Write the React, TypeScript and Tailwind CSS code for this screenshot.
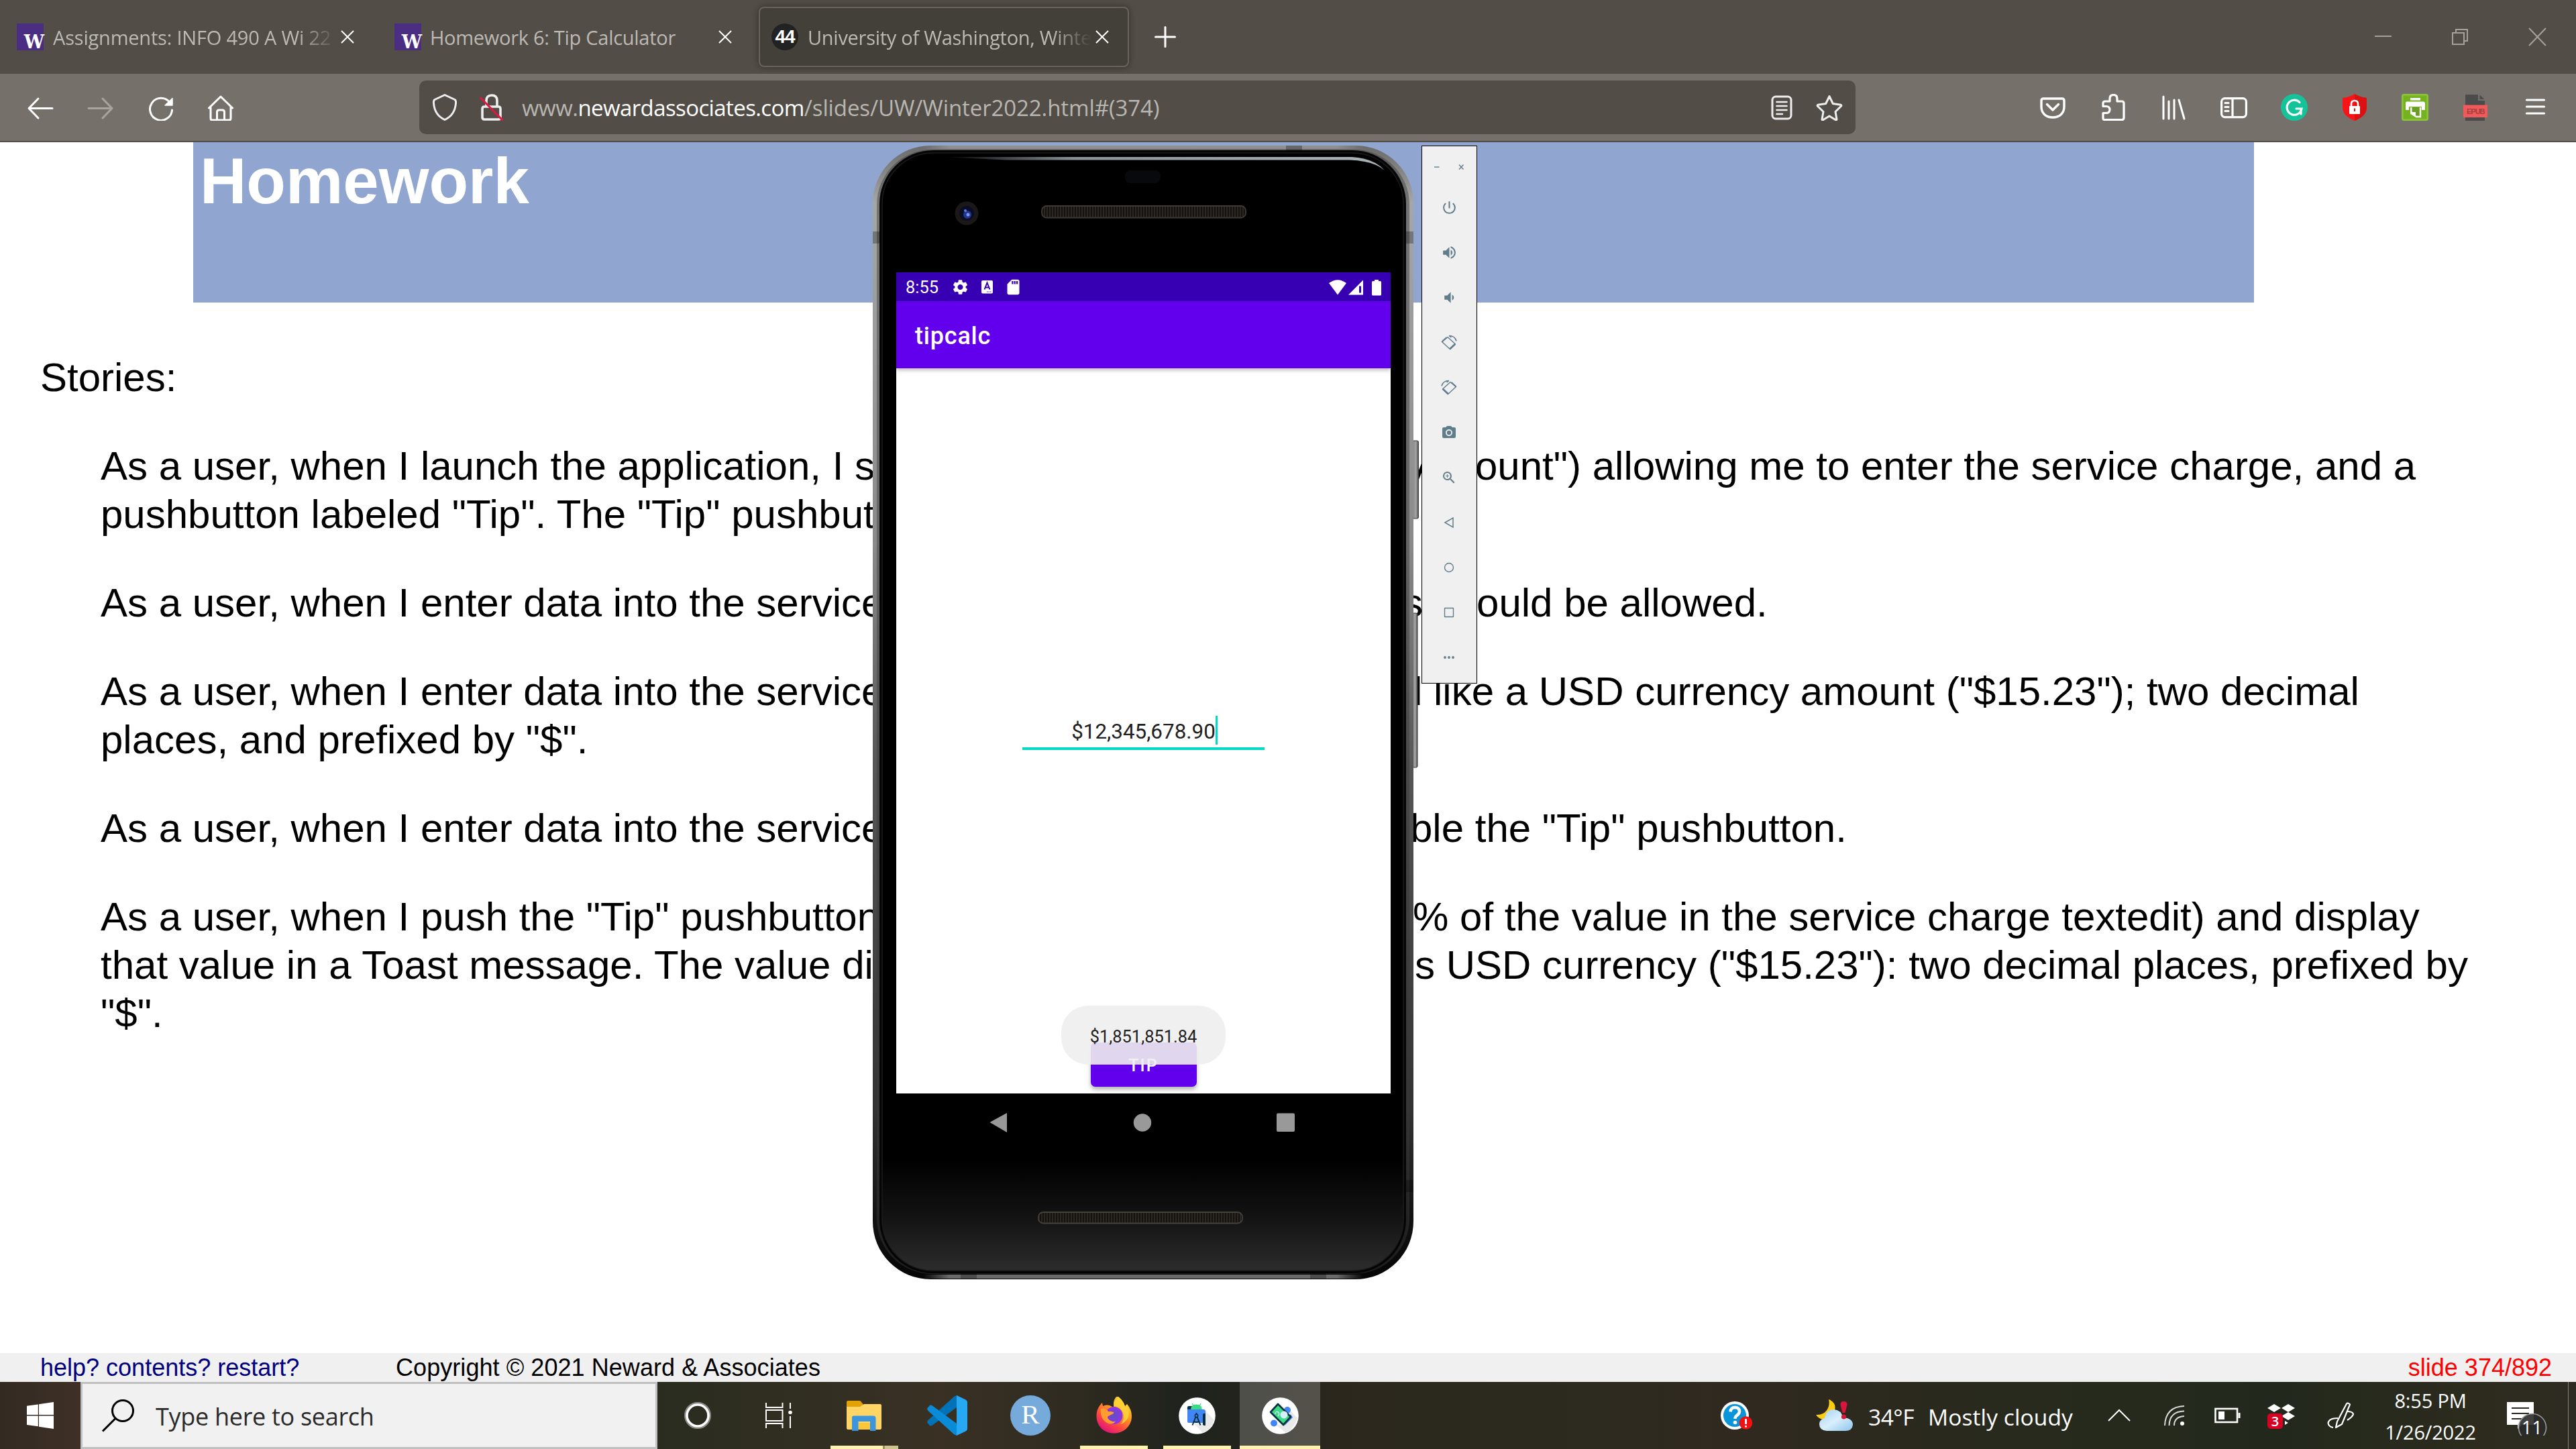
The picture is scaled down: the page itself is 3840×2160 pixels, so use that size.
import type { ReactNode } from "react";
import {
  MdCameraAlt,
  MdPowerSettingsNew,
  MdSettings,
  MdSdCard,
  MdVolumeDown,
  MdVolumeUp,
  MdZoomIn,
} from "react-icons/md";

/* ---------- Browser chrome ---------- */

function CloseX() {
  return (
    <svg className="h-5 w-5 shrink-0" viewBox="0 0 20 20" stroke="#fff" strokeWidth="2" fill="none">
      <path d="M1 1L19 19M19 1L1 19" />
    </svg>
  );
}

function HuskyIcon() {
  return (
    <div className="flex h-10 w-10 shrink-0 items-end justify-end bg-[#4b2e83] [font-family:'DejaVu_Serif',serif] text-[27px] leading-[25px] font-bold tracking-[-1px] text-white">
      W
    </div>
  );
}

function TabStrip() {
  return (
    <header className="flex h-[110px] shrink-0 items-center bg-[#524d46] [font-family:'Open_Sans',sans-serif] text-[29px] tracking-[-0.28px] whitespace-pre text-[#bdbab6]">
      <div className="flex h-[90px] w-[563px] items-center pl-[25px]">
        <HuskyIcon />
        <span className="mt-0.5 ml-[14px] w-[423px] overflow-hidden tracking-[-0.2px] [mask-image:linear-gradient(to_right,black_86%,transparent_100%)]">
          Assignments: INFO 490 A Wi 22
        </span>
        <span className="ml-1.5">
          <CloseX />
        </span>
      </div>
      <div className="flex h-[90px] w-[568px] items-center pl-[25px]">
        <HuskyIcon />
        <span className="mt-0.5 ml-[13px] w-[424px]">Homework 6: Tip Calculator</span>
        <span className="ml-1.5">
          <CloseX />
        </span>
      </div>
      <div className="flex h-[90px] w-[552px] items-center rounded-lg border-2 border-[#69645a] bg-[#43403a] pl-[17px] shadow-[0_0_10px_rgba(0,0,0,0.4)]">
        <div className="flex h-10 w-10 shrink-0 items-center justify-center rounded-full bg-[#222] [font-family:'Liberation_Sans',sans-serif] text-[28px] font-bold tracking-[-1px] text-white">
          44
        </div>
        <span className="mt-0.5 ml-[14px] w-[423px] overflow-hidden [mask-image:linear-gradient(to_right,black_86%,transparent_100%)]">
          University of Washington, Winter
        </span>
        <span className="ml-1.5">
          <CloseX />
        </span>
      </div>
      <svg className="ml-[38px] h-8 w-8" viewBox="0 0 32 32" stroke="#fff" strokeWidth="3" strokeLinecap="round">
        <path d="M16 1.500V30.500M1.500 16H30.500" />
      </svg>
      <svg className="mr-[44px] ml-auto h-8 w-[256px]" viewBox="3541 38 256 32" fill="none" stroke="#a5a29e" strokeWidth="2">
        <path d="M3541 53H3566" />
        <path d="M3657 48H3674V65H3657ZM3662 48V43H3679V60H3674" />
        <path d="M3771 41L3796 67M3796 41L3771 67" />
      </svg>
    </header>
  );
}

function Cell({ children }: { children: ReactNode }) {
  return <div className="flex w-[90px] items-center justify-center">{children}</div>;
}

const line = {
  fill: "none",
  stroke: "#fff",
  strokeWidth: 3,
  strokeLinecap: "round",
  strokeLinejoin: "round",
} as const;

function NavBar() {
  return (
    <div className="flex h-[102px] shrink-0 items-center border-b-2 border-[#524d46] bg-[#757069]">
      <div className="flex pl-[15px]">
        <Cell>
          <svg className="h-10 w-10" viewBox="0 0 40 40" {...line}>
            <path d="M38 21.500H4M17 7L3 21.500L17 36" />
          </svg>
        </Cell>
        <Cell>
          <svg className="h-10 w-10" viewBox="0 0 40 40" {...line} stroke="#a8a49f">
            <path d="M2 21.500H36M23 7L37 21.500L23 36" />
          </svg>
        </Cell>
        <Cell>
          <svg className="h-10 w-10" viewBox="0 0 40 40" {...line}>
            <path d="M36.500 24A16.500 16.500 0 1 1 32.500 12" />
            <path d="M37 6.500V17H26Z" fill="#fff" strokeWidth="1.500" />
          </svg>
        </Cell>
        <Cell>
          <svg className="-ml-0.5 h-10 w-10" viewBox="0 0 40 40" {...line}>
            <path d="M2.500 21L20 4L37.500 21M5 19.500V36.500Q5 39 7.500 39H32.500Q35 39 35 36.500V19.500M14.500 38.500V27Q14.500 24 17.500 24H22.500Q25.500 24 25.500 27V38.500" />
          </svg>
        </Cell>
      </div>

      <div className="ml-[250px] flex h-20 w-[2141px] items-center rounded-[10px] bg-[#524d46]">
        <svg className="ml-5 h-10 w-9 shrink-0" viewBox="0 0 36 40" {...line} stroke="#eee">
          <path d="M18 1.500L33 8.500Q35 10 34.500 14C33.500 26 28 34 18 38.500C8 34 2.500 26 1.500 14Q1 10 3 8.500Z" />
        </svg>
        <svg className="ml-[34px] h-10 w-9 shrink-0" viewBox="0 0 36 40" {...line} stroke="#eee">
          <path d="M10 18V10Q10 2 18 2Q26 2 26 10V18M8 19H28Q31 19 31 22V35Q31 38 28 38H7Q4 38 4 35V22Q4 19 7 19" strokeWidth="3.600" />
          <path d="M1.500 6L34 39" stroke="#e2163f" />
        </svg>
        <div className="mt-0.5 ml-[27px] [font-family:'Open_Sans',sans-serif] text-[33px] tracking-[-0.1px] whitespace-pre text-[#b9b7b3]">
          <span className="tracking-[-0.5px]">www.</span>
          <span className="tracking-[-0.6px] text-white">newardassociates.com</span>/slides/UW/Winter2022.html#(374)
        </div>
        <svg className="mr-[34px] ml-auto h-10 w-[34px]" viewBox="0 0 34 40" {...line} stroke="#eee">
          <rect x="3" y="4" width="28" height="33" rx="5" />
          <path d="M9.500 12H24.500M9.500 18H24.500M9.500 24H24.500M9.500 30H18" strokeWidth="2.600" />
        </svg>
        <svg className="mr-[19px] h-10 w-10" viewBox="0 0 40 40" {...line} stroke="#eee">
          <path d="M20 3.500L25.300 14.500L37 16.200Q38.500 17 37.500 18.200L29 26.500L31 38Q30.500 39.500 29 38.500L20 33L11 38.500Q9.500 39.500 9 38L11 26.500L2.500 18.200Q1.500 17 3 16.200L14.700 14.500Z" />
        </svg>
      </div>

      <div className="ml-[249px] flex">
        <Cell>
          <svg className="h-10 w-10" viewBox="0 0 40 40" {...line} strokeWidth="3.400">
            <path d="M6 7H34Q37 7 37 10V19C37 29 30 35 20 35C10 35 3 29 3 19V10Q3 7 6 7Z" />
            <path d="M11.500 15.500L20 24L28.500 15.500" />
          </svg>
        </Cell>
        <Cell>
          <svg className="h-10 w-10" viewBox="0 0 40 40" {...line} strokeWidth="3.200">
            <path d="M7 38.500H33Q36 38.500 36 35.500V14Q36 11 33 11H26V7Q26 1.500 20.500 1.500Q15 1.500 15 7V11H8Q5 11 5 14V18.500H9.500Q15 18.500 15 23.500Q15 28.500 9.500 28.500H5V36Q5 38.500 7 38.500Z" />
          </svg>
        </Cell>
        <Cell>
          <svg className="h-10 w-10" viewBox="0 0 40 40" {...line}>
            <path d="M5 4V37M13 11V37M21 9V37M28 9L36 37" />
          </svg>
        </Cell>
        <Cell>
          <svg className="h-10 w-10" viewBox="0 0 40 40" {...line} strokeWidth="3.200">
            <rect x="1.600" y="6.600" width="36.800" height="28" rx="5" />
            <path d="M18 7V34M7 13.500H12M7 19.500H12M7 25.500H12" />
          </svg>
        </Cell>
        <Cell>
          <svg className="h-10 w-10" viewBox="0 0 40 40">
            <circle cx="20" cy="20" r="20" fill="#15c39a" />
            <path d="M28 12.500A11 11 0 1 0 31 22H23M30 22V30" fill="none" stroke="#fff" strokeWidth="3.200" strokeLinecap="round" />
          </svg>
        </Cell>
        <Cell>
          <svg className="h-10 w-10" viewBox="0 0 40 40">
            <path d="M20 0Q28 5 38 6V20C38 30 30 36 20 40C10 36 2 30 2 20V6Q12 5 20 0Z" fill="#fb1417" />
            <path d="M20 0Q28 5 38 6V20C38 30 30 36 20 40Z" fill="#dc1010" />
            <path d="M15 18V15Q15 10 20 10Q25 10 25 15V18" fill="none" stroke="#fff" strokeWidth="2.600" />
            <rect x="12" y="18" width="16" height="12" rx="1" fill="#fff" />
            <path d="M20 21.500V26" stroke="#dc1010" strokeWidth="2" />
          </svg>
        </Cell>
        <Cell>
          <svg className="h-10 w-10" viewBox="0 0 40 40">
            <rect width="40" height="40" rx="3" fill="#8bc53a" />
            <rect x="2.500" y="2.500" width="35" height="35" rx="1" fill="#74b21f" />
            <path d="M13 6H28V9.500H13ZM6 13.500Q6 11.500 8 11.500H32Q35 11.500 35 14V24H30V19H11V24H6Z" fill="#fff" />
            <path d="M13 20H29V35H22L13 29Z" fill="#669f20" />
            <path d="M14.300 20V29L22 34H28V20" fill="none" stroke="#fff" strokeWidth="2.400" />
            <path d="M13 27H21V34Z" fill="#fff" />
          </svg>
        </Cell>
        <Cell>
          <div className="relative h-10 w-10">
            <svg className="h-10 w-10" viewBox="0 0 40 40">
              <path d="M5 1H24V10H34V40H5Z" fill="#4b4b4b" />
              <path d="M26.500 1.500L33.500 8H26.500Z" fill="#4b4b4b" />
              <rect x="2" y="16.500" width="36" height="18.500" fill="#f15a5a" />
            </svg>
            <span className="absolute top-[18px] left-[7px] [font-family:'Liberation_Sans',sans-serif] text-[11px] leading-[16px] font-bold tracking-[-1px] text-[#a33f3f]">
              EPUB
            </span>
          </div>
        </Cell>
        <Cell>
          <svg className="h-10 w-10" viewBox="0 0 40 40" {...line}>
            <path d="M6.500 9H32.500M6.500 19H32.500M6.500 29H32.500" strokeWidth="3.200" />
          </svg>
        </Cell>
      </div>
    </div>
  );
}

/* ---------- Slide ---------- */

function Split({ left, width, right }: { left: string; width: string; right: string }) {
  return (
    <div className="flex">
      <span className={`shrink-0 overflow-hidden ${width}`}>{left}</span>
      <span>{right}</span>
    </div>
  );
}

function Slide() {
  return (
    <main className="flex min-h-0 flex-1 flex-col bg-white [font-family:'Liberation_Sans',Arial,sans-serif] text-black">
      <h1 className="ml-[288px] h-[239px] w-[3072px] shrink-0 bg-[#90a6d0] pt-[10px] pl-[10px] text-[96px] leading-none font-bold text-white">
        Homework
      </h1>
      <div className="mt-[76px] flex flex-1 flex-col gap-[60px] pl-[60px] text-[60px] leading-[72px] whitespace-pre">
        <p>Stories:</p>
        <div className="pl-[90px]">
          <Split
            width="w-[1959px]"
            left="As a user, when I launch the application, I see"
            right={'Amount") allowing me to enter the service charge, and a'}
          />
          <p>{'pushbutton labeled "Tip". The "Tip" pushbutton'}</p>
        </div>
        <div className="pl-[90px]">
          <Split width="w-[1941px]" left="As a user, when I enter data into the service" right="s should be allowed." />
        </div>
        <div className="pl-[90px]">
          <Split
            width="w-[1937px]"
            left="As a user, when I enter data into the service"
            right={'d like a USD currency amount ("$15.23"); two decimal'}
          />
          <p>{'places, and prefixed by "$".'}</p>
        </div>
        <div className="pl-[90px]">
          <Split
            width="w-[1952px]"
            left="As a user, when I enter data into the service"
            right={'ble the "Tip" pushbutton.'}
          />
        </div>
        <div className="pl-[90px]">
          <Split
            width="w-[1956px]"
            left={'As a user, when I push the "Tip" pushbutton'}
            right="% of the value in the service charge textedit) and display"
          />
          <Split
            width="w-[1959px]"
            left="that value in a Toast message. The value dis"
            right={'s USD currency ("$15.23"): two decimal places, prefixed by'}
          />
          <p>{'"$".'}</p>
        </div>
      </div>
      <footer className="flex h-[43px] shrink-0 items-center bg-[#f0f0f0] pr-[36px] pl-[60px] text-[36px] leading-[43px] whitespace-pre">
        <span className="w-[530px] text-[#000080]">help? contents? restart?</span>
        <span className="tracking-[0.06px]">Copyright © 2021 Neward &amp; Associates</span>
        <span className="ml-auto text-[#f00]">slide 374/892</span>
      </footer>
    </main>
  );
}

/* ---------- Emulator ---------- */

function PhoneFrame() {
  return (
    <svg className="absolute top-[215px] left-[1298px] h-[1694px] w-[820px]" viewBox="1298 215 820 1694">
      <defs>
        <linearGradient id="rim" x1="0" y1="0" x2="0" y2="1">
          <stop offset="0" stopColor="#6a6a6a" />
          <stop offset="0.050" stopColor="#a6a6a6" />
          <stop offset="0.350" stopColor="#8a8a8a" />
          <stop offset="0.550" stopColor="#565656" />
          <stop offset="0.850" stopColor="#333" />
          <stop offset="0.950" stopColor="#111" />
          <stop offset="1" stopColor="#050505" />
        </linearGradient>
        <linearGradient id="edge" x1="0" y1="0" x2="1" y2="0">
          <stop offset="0" stopColor="#8f8f8f" stopOpacity="0" />
          <stop offset="0.060" stopColor="#8f8f8f" />
          <stop offset="0.940" stopColor="#8f8f8f" />
          <stop offset="1" stopColor="#8f8f8f" stopOpacity="0" />
        </linearGradient>
        <linearGradient id="edgeDark" x1="0" y1="0" x2="1" y2="0">
          <stop offset="0" stopColor="#6a6a6a" stopOpacity="0" />
          <stop offset="0.060" stopColor="#6a6a6a" />
          <stop offset="0.940" stopColor="#6a6a6a" />
          <stop offset="1" stopColor="#6a6a6a" stopOpacity="0" />
        </linearGradient>
        <linearGradient id="glass" x1="0" y1="0" x2="0" y2="1">
          <stop offset="0" stopColor="#000" />
          <stop offset="0.900" stopColor="#000" />
          <stop offset="0.950" stopColor="#121212" />
          <stop offset="1" stopColor="#2c2c2c" />
        </linearGradient>
        <linearGradient id="shine" x1="0" y1="0" x2="1" y2="0">
          <stop offset="0" stopColor="#889399" stopOpacity="0" />
          <stop offset="0.300" stopColor="#889399" />
          <stop offset="1" stopColor="#aab4b8" />
        </linearGradient>
        <linearGradient id="key" x1="0" y1="0" x2="1" y2="0">
          <stop offset="0" stopColor="#6d6d6d" />
          <stop offset="0.700" stopColor="#a5a5a5" />
          <stop offset="1" stopColor="#4a4a4a" />
        </linearGradient>
        <pattern id="mesh" width="4" height="4" patternUnits="userSpaceOnUse">
          <rect width="4" height="4" fill="#14120f" />
          <rect width="2" height="4" fill="#2b2722" />
        </pattern>
      </defs>
      <rect x="2102" y="657" width="12.500" height="116" rx="2" fill="url(#key)" stroke="#3c3c3c" strokeWidth="1" />
      <rect x="2102" y="914" width="11" height="230" rx="2" fill="url(#key)" stroke="#3c3c3c" strokeWidth="1" />
      <rect x="1301" y="217" width="806" height="1690" rx="86" fill="url(#rim)" />
      <rect x="1307" y="223" width="794" height="1676" rx="82" fill="#3a3a3a" fillOpacity="0.450" />
      <rect x="1376" y="217" width="656" height="5" fill="url(#edge)" />
      <rect x="1376" y="1900" width="656" height="6" fill="url(#edgeDark)" />
      <rect x="1311" y="224" width="785" height="1674" rx="80" fill="#050505" />
      <g fill="#000" fillOpacity="0.280">
        <rect x="1301" y="345" width="11" height="18" />
        <rect x="2096" y="345" width="11" height="18" />
        <rect x="2096" y="1759" width="11" height="18" />
        <rect x="1917" y="217" width="24" height="9" />
        <rect x="1432" y="1898" width="24" height="9" />
        <rect x="1953" y="1898" width="24" height="9" />
      </g>
      <rect x="1315" y="228" width="777" height="1666" rx="76" fill="url(#glass)" stroke="#1d1d1d" strokeWidth="1.500" />
      <path d="M1405 234H2015Q2048 236 2064 254Q2048 240 2012 238.500H1500Z" fill="url(#shine)" />
      <rect x="1677" y="254" width="53" height="19" rx="8" fill="#08090d" />
      <circle cx="1441" cy="318" r="17.500" fill="#1c1817" />
      <circle cx="1441" cy="318" r="11" fill="#0a0d26" />
      <circle cx="1442" cy="320" r="6" fill="#22368c" />
      <circle cx="1443" cy="320" r="2.500" fill="#7b97f5" />
      <circle cx="1439" cy="314" r="2" fill="#5f7ae0" />
      <rect x="1553" y="307" width="304" height="17.500" rx="7" fill="url(#mesh)" stroke="#3e3b37" strokeWidth="1.800" />
      <rect x="1548" y="1807" width="304" height="16.500" rx="7" fill="url(#mesh)" stroke="#45413b" strokeWidth="1.800" />
    </svg>
  );
}

function PhoneScreen() {
  return (
    <div className="absolute top-[406px] left-[1336px] flex h-[1310px] w-[737px] flex-col [font-family:Roboto,sans-serif]">
      <div className="flex h-[43px] shrink-0 items-center bg-[#3700b3] text-white">
        <span className="mt-[3px] ml-[14px] w-[68px] text-[25.4px] leading-none">8:55</span>
        <MdSettings className="h-[28px] w-[27px]" />
        <svg className="ml-[16px] h-6 w-[22px]" viewBox="0 0 22 24">
          <rect x="2" y="2" width="17" height="19.500" rx="2" fill="#fff" />
          <path d="M6.500 15.500L10.500 5.500L14.500 15.500M8 12.500H13" fill="none" stroke="#3700b3" strokeWidth="2" />
          <path d="M10 19H17" stroke="#3700b3" strokeWidth="1" strokeDasharray="1.500 1" />
        </svg>
        <MdSdCard className="ml-[14px] h-7 w-[27px]" />
        <svg className="mr-[13px] ml-auto h-7 w-[80px]" viewBox="1980 412 80 28" fill="#fff">
          <path d="M1994 437.500L1981 420Q1994 410.500 2007 420Z" />
          <path d="M2010 437.500L2032 415.500V437.500Z" />
          <path d="M2026 424.500H2029V434.500H2026Z" fill="#3700b3" />
          <path d="M2049 417V415H2055V417H2057.500Q2059 417 2059 418.500V437Q2059 438.500 2057.500 438.500H2046.500Q2045 438.500 2045 437V418.500Q2045 417 2046.500 417Z" />
        </svg>
      </div>
      <div className="z-10 flex h-[100px] shrink-0 items-center bg-[#6200ee] pt-[3px] pl-7 text-[36px] font-medium tracking-[0.8px] text-white shadow-[0_3px_6px_rgba(0,0,0,0.25)]">
        tipcalc
      </div>
      <div className="relative flex h-[1081px] shrink-0 flex-col items-center bg-white">
        <div className="mt-[518px] flex h-[51px] w-[361px] items-start justify-center border-b-4 border-[#03dac5]">
          <span className="mt-0.5 text-[31.4px] leading-[43px] text-[#212121]">$12,345,678.90</span>
          <span className="-mr-[3px] h-[43px] w-[3px] bg-[#03dac5]" />
        </div>
        <button className="mt-auto mb-[10px] flex h-[66px] w-[158px] items-center justify-center rounded-[7px] bg-[#6200ee] pt-1 text-[25px] font-medium tracking-[2px] text-white shadow-[0_4px_6px_rgba(0,0,0,0.3)]">
          TIP
        </button>
        <div className="absolute bottom-[43px] left-[246px] flex h-[88px] w-[245px] items-center justify-center rounded-[40px] bg-[#eeeeee]/90 pt-1 text-[25.4px] text-[#212121]">
          $1,851,851.84
        </div>
      </div>
      <div className="flex h-[86px] shrink-0 items-center bg-black pl-[46px]">
        {[
          <path key="b" d="M0.500 14L26 0V29Z" />,
          <circle key="h" cx="14" cy="14.500" r="13.200" />,
          <rect key="r" x="0" y="0.500" width="27" height="27.500" rx="2" />,
        ].map((shape, i) => (
          <div key={i} className="flex w-[214px] justify-center">
            <svg className="h-[29px] w-[28px]" viewBox="0 0 28 29" fill="#999">
              {shape}
            </svg>
          </div>
        ))}
      </div>
    </div>
  );
}

function RotateIcon({ flip = false }: { flip?: boolean }) {
  return (
    <svg className={flip ? "h-6 w-6 -scale-x-100" : "h-6 w-6"} viewBox="0 0 24 24" fill="none" stroke="#607d8b">
      <path d="M1.500 10.500L10 3.500L21 13.500L13.500 21.500Z" strokeWidth="1.400" strokeLinejoin="round" />
      <path d="M13 21.500L21.500 13.500" strokeWidth="2.600" />
      <path d="M1.500 10.500L8.500 4" strokeWidth="2.200" />
      <path d="M12 1.500Q21 1.500 23 9.500M12 1.500L15.500 4" strokeWidth="1.500" />
    </svg>
  );
}

function EmulatorToolbar() {
  const tools: ReactNode[] = [
    <MdPowerSettingsNew key="power" className="h-[25px] w-[25px]" />,
    <MdVolumeUp key="up" className="h-[25px] w-[25px]" />,
    <MdVolumeDown key="down" className="h-[25px] w-[25px]" />,
    <RotateIcon key="left" />,
    <RotateIcon key="right" flip />,
    <MdCameraAlt key="camera" className="h-6 w-6" />,
    <MdZoomIn key="zoom" className="h-6 w-6" />,
    <svg key="back" className="h-[18px] w-[18px]" viewBox="0 0 18 18" fill="none" stroke="#607d8b" strokeWidth="1.500">
      <path d="M3 9L15 2V16Z" />
    </svg>,
    <svg key="home" className="h-[18px] w-[18px]" viewBox="0 0 18 18" fill="none" stroke="#607d8b" strokeWidth="1.400">
      <circle cx="9" cy="9" r="6.500" />
    </svg>,
    <svg key="recent" className="h-[18px] w-[18px]" viewBox="0 0 18 18" fill="none" stroke="#607d8b" strokeWidth="1.400">
      <rect x="2.500" y="2.500" width="13" height="13" rx="0.500" />
    </svg>,
    <svg key="more" className="h-[18px] w-[18px]" viewBox="0 0 18 18" fill="#607d8b">
      <circle cx="3" cy="9" r="1.900" />
      <circle cx="9" cy="9" r="1.900" />
      <circle cx="15" cy="9" r="1.900" />
    </svg>,
  ];
  return (
    <div className="absolute top-[217px] left-[2119px] flex h-[802px] w-[83px] flex-col items-center border border-black bg-[#f0f0f0] pr-[1px] text-[#607d8b]">
      <svg className="mt-[23px] h-4 w-[48px]" viewBox="0 0 48 16" stroke="#607d8b" strokeWidth="1.400">
        <path d="M2 8H9.500" />
        <path d="M39 4.500L45.500 11.500M45.500 4.500L39 11.500" />
      </svg>
      <div className="mt-[19px] flex flex-col">
        {tools.map((tool, i) => (
          <div key={i} className="flex h-[67px] w-[80px] items-center justify-center">
            {tool}
          </div>
        ))}
      </div>
    </div>
  );
}

/* ---------- Taskbar ---------- */

function TaskButton({ children, bar, active = false }: { children: ReactNode; bar?: ReactNode; active?: boolean }) {
  return (
    <div
      className={
        active
          ? "relative flex h-[100px] w-[120px] items-center justify-center bg-white/20"
          : "relative flex h-[100px] w-[120px] items-center justify-center"
      }
    >
      {children}
      {bar}
    </div>
  );
}

const runningBar = <div className="absolute bottom-0 left-[10px] h-[5px] w-[101px] bg-[#fff2ae]" />;

function FolderIcon() {
  return (
    <svg className="mt-px h-[46px] w-[52px]" viewBox="0 0 52 46">
      <path d="M0 2Q0 0 2 0H19Q21 0 22 2L26 7L20 10H0Z" fill="#e3a103" />
      <path d="M0 9H20L26 5H50Q52 5 52 7V41Q52 43 50 43H2Q0 43 0 41Z" fill="#ffd565" />
      <rect x="17" y="33" width="18" height="10" fill="#fcc63a" />
      <path d="M8 25Q8 22.500 11 22.500H40Q43.500 22.500 43.500 26V45H35V31H17.500V45H8Z" fill="#3b96dd" />
    </svg>
  );
}

function CodeIcon() {
  return (
    <svg className="h-[60px] w-[60px]" viewBox="0 0 60 60">
      <path d="M44 0V18L8 44.500Q5 46.500 3.500 44.500L0.500 41Q-0.500 39 1.500 37L40 2Z" fill="#0072b8" />
      <path d="M44 60V42L8 15.500Q5 13.500 3.500 15.500L0.500 19Q-0.500 21 1.500 23L40 58Z" fill="#0a8bd8" />
      <path d="M44 0L57.500 6.500Q60 8 60 10V50Q60 52 57.500 53.500L44 60Z" fill="#27a8f3" />
    </svg>
  );
}

function FirefoxIcon() {
  return (
    <svg className="-mt-0.5 h-[56px] w-[53px]" viewBox="0 0 53 56">
      <defs>
        <linearGradient id="fx" x1="0.900" y1="0.050" x2="0.300" y2="1">
          <stop offset="0" stopColor="#ffe62b" />
          <stop offset="0.400" stopColor="#ff9a22" />
          <stop offset="0.700" stopColor="#ff4a3d" />
          <stop offset="1" stopColor="#e0127d" />
        </linearGradient>
        <radialGradient id="fxglobe">
          <stop offset="0" stopColor="#5c51c4" />
          <stop offset="1" stopColor="#9433e6" />
        </radialGradient>
      </defs>
      <path
        d="M33 1C38 5 41 9 43 15Q46 12 46 12Q53 20 53 30C53 45 41 55.500 26.500 55.500C12 55.500 0.500 45 0.500 30C0.500 21 4 15 9 10L10 15Q13 13 17 13.500C22 14 24 17 26 16C26 9 29 4 33 1Z"
        fill="url(#fx)"
      />
      <circle cx="26.500" cy="29" r="13" fill="url(#fxglobe)" />
      <path d="M30 1C26 6 25 11 27 15Q36 16 40 24Q43 34 37 42Q50 36 49 22L46 12L44 18Q41 8 33 1Z" fill="#ffd43a" fillOpacity="0.850" />
      <path d="M7 19Q14 17 18 23Q22 23 26 24Q27 26 23 27.500L18 30Q16 31 18 34Q22 39 29 38Q24 44 16 40C8 35 6 27 7 19Z" fill="#ff9d2e" />
    </svg>
  );
}

function AndroidStudioIcon() {
  return (
    <svg className="h-[55px] w-[55px]" viewBox="0 0 55 55">
      <circle cx="27.500" cy="27.500" r="27.300" fill="#fff" />
      <path d="M40 20L53 34Q49 48 36 53L22 38Z" fill="#e9e9e9" />
      <path d="M13 15Q13 13 15 13H20V19H13Z" fill="#073042" />
      <path d="M18 19Q18 10.500 26.500 10.500Q35 10.500 35 19Z" fill="#3ddb85" />
      <path d="M20 9L22.500 13M33 9L31 13" stroke="#3ddb85" strokeWidth="1.200" />
      <path d="M13 18H37Q40 18 40 21V38H15Q13 38 13 36Z" fill="#4285f4" />
      <path d="M36 26Q36 24 38 24H40V42H38Q36 42 36 40Z" fill="#073042" />
      <path d="M26.500 23V27M25.500 29L20.500 41.500M27.500 29L32.500 41.500M22 35.500Q26.500 38.500 31 35.500" fill="none" stroke="#073042" strokeWidth="2" />
      <circle cx="26.500" cy="27.500" r="2.200" fill="#4285f4" stroke="#073042" strokeWidth="1.600" />
    </svg>
  );
}

function EmulatorIcon() {
  return (
    <svg className="h-[55px] w-[55px]" viewBox="0 0 55 55">
      <circle cx="27.500" cy="27.500" r="27.300" fill="#fff" />
      <path d="M42 19L53 31Q49 46 36 53L20 40L34 42Z" fill="#e9e9e9" />
      <circle cx="38" cy="19" r="5" fill="#4285f4" />
      <circle cx="18" cy="38.500" r="5" fill="#4285f4" />
      <path d="M33 43L46 30L43 25Z" fill="#4285f4" />
      <path d="M24 10L43 29L32 41L13 22Z" fill="#3ddb85" stroke="#073042" strokeWidth="2.600" strokeLinejoin="round" />
      <circle cx="33" cy="26" r="5.500" fill="#d7effe" />
      <path d="M20 25Q20 20 24.500 22Q27 25 24 28" fill="none" stroke="#d7effe" strokeWidth="1.400" />
    </svg>
  );
}

function Taskbar() {
  return (
    <div className="flex h-[100px] shrink-0 bg-[linear-gradient(90deg,#332a22_0px,#3e3027_120px,#2a2c20_980px,#332f22_1250px,#3a3024_1400px,#2f2b20_1600px,#1f221d_1770px,#2b271d_2000px,#2c2a1f_2300px,#30291f_2600px,#262a1d_3100px,#22291c_3400px,#2c2b1e_3700px,#2e2c22_3840px)] [font-family:'Open_Sans',sans-serif] text-white">
      <div className="flex w-[120px] items-center justify-center">
        <svg className="h-10 w-10" viewBox="0 0 40 40" fill="#fff">
          <path d="M0 5.800L16.800 3.400V18.900H0ZM18 3.200L40 0V18.900H18ZM0 20.500H16.800V36.300L0 34ZM18 20.500H40V40L18 36.800Z" />
        </svg>
      </div>
      <div className="flex w-[860px] items-center border-[3px] border-[#c0c0c0] bg-[#f1f1f1]">
        <svg className="ml-[28px] h-[52px] w-[52px]" viewBox="0 0 52 52" fill="none" stroke="#000" strokeWidth="3">
          <circle cx="32" cy="19" r="15.500" />
          <path d="M21.500 30L2 49.500" />
        </svg>
        <span className="mt-1 ml-[29px] text-[36px] tracking-[-0.3px] text-[#2b2b2b]">Type here to search</span>
      </div>
      <div className="flex gap-1">
        <TaskButton>
          <svg className="h-10 w-10" viewBox="0 0 40 40" fill="none">
            <circle cx="20" cy="20" r="18.500" stroke="#8b8a84" strokeWidth="3" />
            <circle cx="20" cy="20" r="16" stroke="#fff" strokeWidth="3.600" />
          </svg>
        </TaskButton>
        <TaskButton>
          <svg className="mr-[7px] h-10 w-10" viewBox="0 0 40 40" fill="none" stroke="#fff" strokeWidth="2">
            <path d="M1 1V8H25.500V1M1 12H25.500V28H1ZM1 39V32H25.500V39M37 1V10M37 21V39" />
            <circle cx="37" cy="15.500" r="2.800" fill="#fff" stroke="none" />
          </svg>
        </TaskButton>
        <TaskButton
          bar={
            <div className="absolute bottom-0 left-[10px] flex h-[5px] w-[101px]">
              <div className="w-[78px] bg-[#fff2ae]" />
              <div className="w-[3px] bg-[#97906b]" />
              <div className="w-[20px] bg-[#cdc38f]" />
            </div>
          }
        >
          <FolderIcon />
        </TaskButton>
        <TaskButton>
          <CodeIcon />
        </TaskButton>
        <TaskButton>
          <div className="flex h-[60px] w-[60px] items-center justify-center rounded-full bg-[#75aadb] pb-1 [font-family:'Liberation_Serif',serif] text-[41px] leading-none text-white">
            R
          </div>
        </TaskButton>
        <TaskButton bar={runningBar}>
          <FirefoxIcon />
        </TaskButton>
        <TaskButton bar={runningBar}>
          <AndroidStudioIcon />
        </TaskButton>
        <TaskButton active bar={<div className="absolute bottom-0 left-0 h-[5px] w-full bg-[#fff2ae]" />}>
          <EmulatorIcon />
        </TaskButton>
      </div>

      <div className="ml-[597px] flex items-center">
        <svg className="h-[48px] w-[48px]" viewBox="0 0 48 48">
          <circle cx="21" cy="24" r="21" fill="#fff" />
          <circle cx="21" cy="24" r="17" fill="#0b95d9" />
          <path d="M14.500 18.500Q15 12 21.500 12Q28 12.500 28 18Q28 21.500 24 24Q21.500 26 21.500 29" fill="none" stroke="#fff" strokeWidth="4.500" />
          <circle cx="21.500" cy="34.500" r="2.800" fill="#fff" />
          <circle cx="37.500" cy="35" r="9.800" fill="#f21010" />
          <path d="M37.500 29V37M37.500 39V41.500" stroke="#fff" strokeWidth="3" />
        </svg>
        <svg className="ml-[93px] h-[50px] w-[58px]" viewBox="0 0 58 50">
          <defs>
            <linearGradient id="cloud" x1="0" y1="0" x2="1" y2="1">
              <stop offset="0" stopColor="#9fd0f3" />
              <stop offset="0.500" stopColor="#d9effc" />
              <stop offset="1" stopColor="#8cc3ec" />
            </linearGradient>
          </defs>
          <path d="M20 1Q32 6 29 18Q26 30 12 31Q5 30 1 24Q12 25 18 16Q22 9 20 1Z" fill="#fccc10" />
          <path d="M17 48Q6 47 6 38Q6 31 14 29Q16 16 28 16Q39 17 41 28Q56 29 56 39Q55 48 45 48Z" fill="url(#cloud)" />
          <path d="M37.500 9Q37.500 4 42.500 4Q47.500 4 47.500 9L44.500 21H40.500Z" fill="#dc143c" />
          <circle cx="42.500" cy="27" r="3.600" fill="#dc143c" />
        </svg>
        <span className="mt-1 ml-[21px] w-[89px] text-[33.500px] tracking-[-0.5px]">34°F</span>
        <span className="mt-1 w-[268px] text-[33.500px] tracking-[0.1px] whitespace-pre">Mostly cloudy</span>
        <svg className="h-5 w-[34px]" viewBox="0 0 34 20" fill="none" stroke="#fff" strokeWidth="2">
          <path d="M1 18L17 2L33 18" />
        </svg>
        <svg className="ml-[49px] h-8 w-8" viewBox="0 0 32 32" fill="none" stroke="#d8d8d4" strokeWidth="2">
          <path d="M2 31Q3 3 31 2M8.500 31Q9 10 31 9.500M16 31Q16 18 31 17" />
          <circle cx="28" cy="28" r="3" fill="#fff" stroke="none" />
        </svg>
        <svg className="ml-[44px] h-6 w-[40px]" viewBox="0 0 40 24" fill="none" stroke="#fff" strokeWidth="2.600">
          <rect x="1.500" y="2" width="32.500" height="20" />
          <rect x="6" y="6" width="9" height="12" fill="#fff" stroke="none" />
          <path d="M37 8V16" strokeWidth="3" />
        </svg>
        <div className="relative ml-[39px] h-10 w-[42px]">
          <svg className="h-10 w-[42px]" viewBox="0 0 42 40" fill="#fff">
            <path d="M10 3L20 9L10 15L0 9ZM31 3L41 9L31 15L21 9ZM31 15L41 21L31 27L21 21ZM26 28L31 31L26 34Z" />
          </svg>
          <div className="absolute top-[17px] left-0 flex h-[23px] w-[23px] items-center justify-center rounded-[5px] bg-[#d80024] text-[20px] leading-none font-semibold">
            3
          </div>
        </div>
        <svg className="ml-[47px] h-10 w-10" viewBox="0 0 40 40" fill="none" stroke="#fff" strokeWidth="2.200">
          <path d="M13 38L15 29L29 2.500Q31 0.500 34 3.500L22 33Z" strokeLinejoin="round" />
          <path d="M30 14Q38 14 39 18Q38 22 30 27M16 24Q3 24 1.500 31Q2 37 9 38" />
        </svg>
        <div className="mt-px ml-[36px] flex w-[156px] flex-col text-center text-[29px] leading-[47px] tracking-[-0.2px]">
          <span>8:55 PM</span>
          <span>1/26/2022</span>
        </div>
        <div className="relative ml-[36px] h-[60px] w-[60px]">
          <svg className="h-[60px] w-[60px]" viewBox="0 0 60 60">
            <path d="M0 10H40V44H22L16 50V44H0Z" fill="#fff" />
            <path d="M7 19H33M7 27H33M7 35H22" stroke="#2b2a20" strokeWidth="2" />
            <circle cx="38" cy="48" r="20.500" fill="#2a2a2a" fillOpacity="0.900" stroke="#9a9a98" strokeWidth="1.600" />
          </svg>
          <span className="absolute top-[33px] left-[22px] text-[27px] leading-[30px]">11</span>
        </div>
      </div>
      <div className="mr-[11px] ml-auto w-px bg-[#83827b]" />
    </div>
  );
}

export default function App() {
  return (
    <div className="relative flex h-[2160px] w-[3840px] flex-col overflow-hidden">
      <TabStrip />
      <NavBar />
      <Slide />
      <Taskbar />
      <PhoneFrame />
      <PhoneScreen />
      <EmulatorToolbar />
    </div>
  );
}
